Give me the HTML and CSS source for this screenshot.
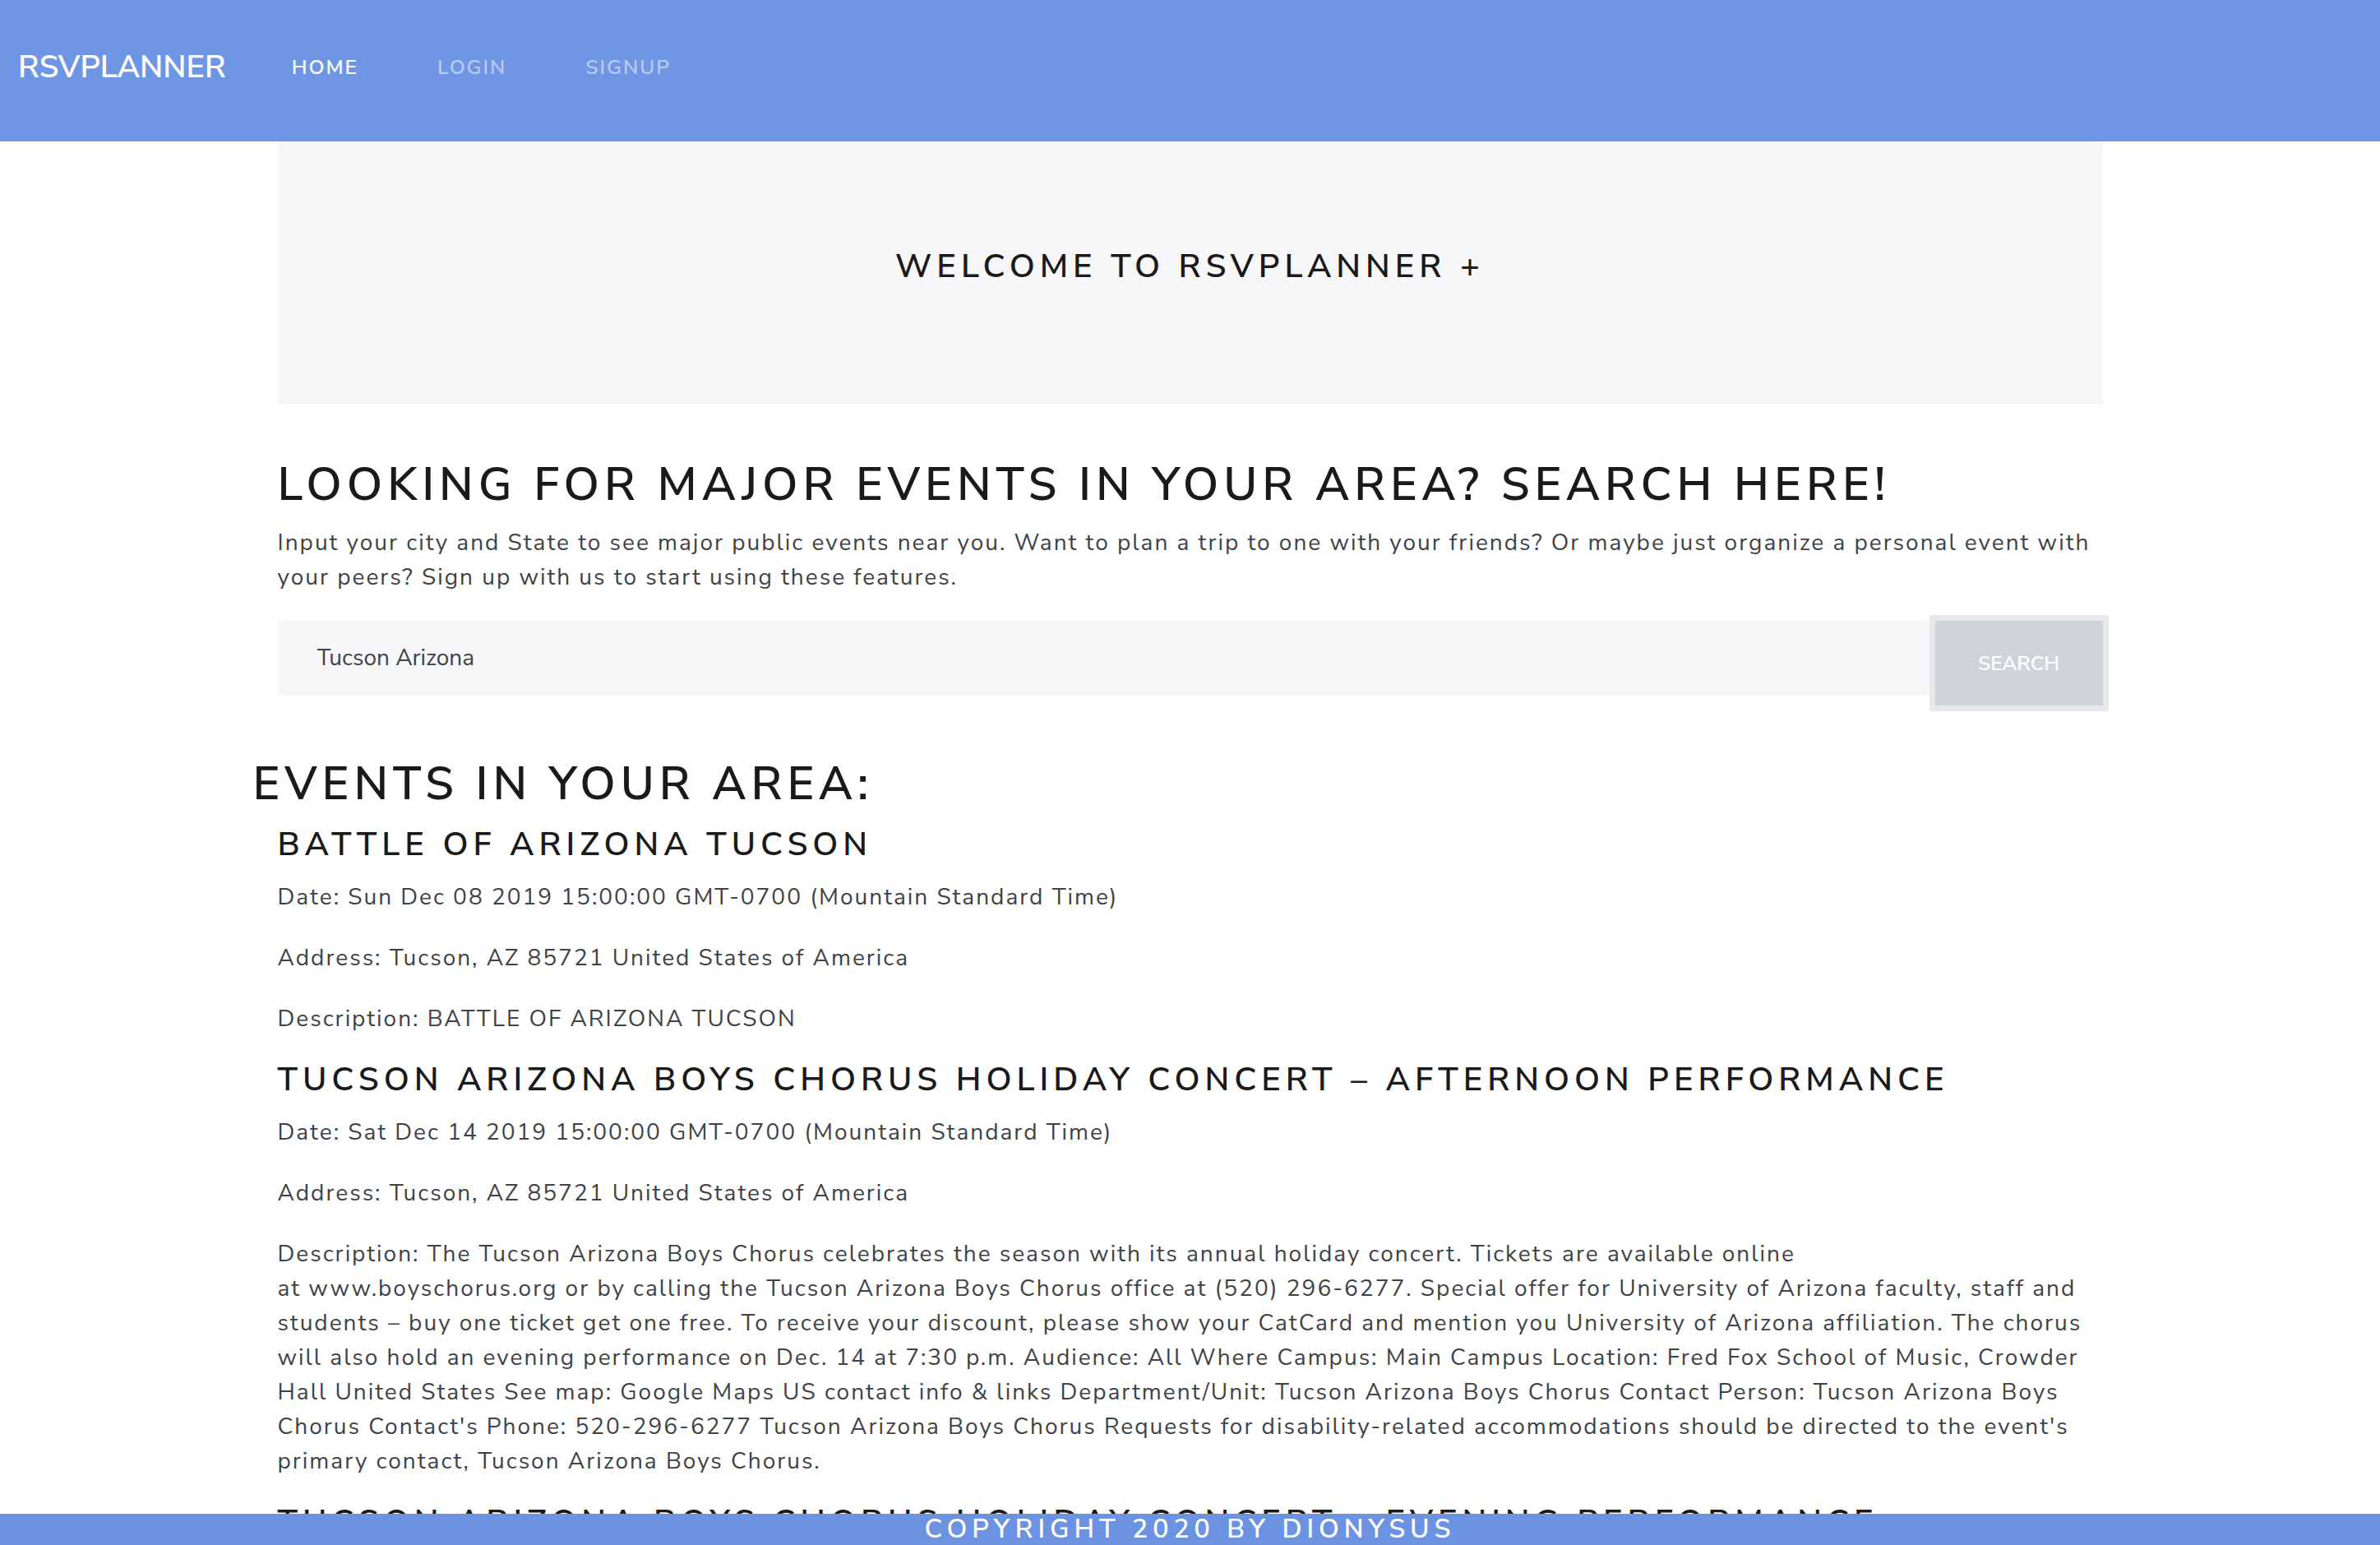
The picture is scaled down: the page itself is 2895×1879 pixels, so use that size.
FILE: index.html
```html
<!DOCTYPE html>
<html lang="en">
<head>
<meta charset="utf-8">
<title>RSVPlanner</title>
<link rel="stylesheet" href="styles.css">
</head>
<body>
<nav class="navbar">
  <a class="brand" href="#">RSVPlanner</a>
  <ul class="nav">
    <li><a class="nav-link active" href="#">Home</a></li>
    <li><a class="nav-link" href="#">Login</a></li>
    <li><a class="nav-link" href="#">Signup</a></li>
  </ul>
</nav>

<main class="container">
  <div class="jumbotron">
    <h4 class="welcome">Welcome to RSVPlanner +</h4>
  </div>
  <h2 class="h2">Looking for major events in your area? Search here!</h2>
  <p class="lead-text">Input your city and State to see major public events near you. Want to plan a trip to one with your friends? Or maybe just organize a personal event with your peers? Sign up with us to start using these features.</p>
  <form class="search">
    <input class="search-input" type="text" value="Tucson Arizona">
    <button class="search-btn" type="button">Search</button>
  </form>
</main>

<section class="events">
  <h2 class="h2">Events in your area:</h2>
  <div class="event">
    <h4 class="h4">Battle of Arizona Tucson</h4>
    <p>Date: Sun Dec 08 2019 15:00:00 GMT-0700 (Mountain Standard Time)</p>
    <p>Address: Tucson, AZ 85721 United States of America</p>
    <p>Description: BATTLE OF ARIZONA TUCSON</p>
  </div>
  <div class="event">
    <h4 class="h4">Tucson Arizona Boys Chorus Holiday Concert – Afternoon Performance</h4>
    <p>Date: Sat Dec 14 2019 15:00:00 GMT-0700 (Mountain Standard Time)</p>
    <p>Address: Tucson, AZ 85721 United States of America</p>
    <p>Description: The Tucson Arizona Boys Chorus celebrates the season with its annual holiday concert. Tickets are available online<br>at www.boyschorus.org or by calling the Tucson Arizona Boys Chorus office at (520) 296-6277. Special offer for University of Arizona faculty, staff and students – buy one ticket get one free. To receive your discount, please show your CatCard and mention you University of Arizona affiliation. The chorus will also hold an evening performance on Dec. 14 at 7:30 p.m. Audience: All Where Campus: Main Campus Location: Fred Fox School of Music, Crowder Hall United States See map: Google Maps US contact info &amp; links Department/Unit: Tucson Arizona Boys Chorus Contact Person: Tucson Arizona Boys Chorus Contact's Phone: 520-296-6277 Tucson Arizona Boys Chorus Requests for disability-related accommodations should be directed to the event's primary contact, Tucson Arizona Boys Chorus.</p>
  </div>
  <div class="event">
    <h4 class="h4">Tucson Arizona Boys Chorus Holiday Concert – Evening Performance</h4>
    <p>Date: Sat Dec 14 2019 19:30:00 GMT-0700 (Mountain Standard Time)</p>
    <p>Address: Tucson, AZ 85721 United States of America</p>
  </div>
</section>

<footer class="footer">
  <h5 class="footer-text">Copyright 2020 by Dionysus</h5>
</footer>
</body>
</html>
```

FILE: styles.css
```css
html, body {
  margin: 0;
  padding: 0;
}

body {
  font-family: "Nunito Sans", Lato, "Noto Sans", sans-serif;
  font-size: 28px;
  line-height: 42px;
  color: #404346;
  background: #ffffff;
  letter-spacing: 2px;
}

/* Navbar */
.navbar {
  height: 172px;
  background: #6f96e5;
  display: flex;
  align-items: center;
  padding: 0 22px 8px;
  box-sizing: border-box;
}

.brand {
  color: #ffffff;
  text-decoration: none;
  font-size: 38px;
  font-weight: 600;
  text-transform: uppercase;
  letter-spacing: 0;
  margin-right: 32px;
}

.nav {
  list-style: none;
  display: flex;
  margin: 0;
  padding: 0;
}

.nav-link {
  display: block;
  padding: 0 48px;
  font-size: 24.5px;
  font-weight: 600;
  text-transform: uppercase;
  letter-spacing: 2px;
  color: rgba(255, 255, 255, 0.5);
  text-decoration: none;
}

.nav-link.active {
  color: #ffffff;
}

/* Layout */
.container {
  width: 2280px;
  margin: 0 auto;
  padding: 0 30px;
  box-sizing: border-box;
}

.jumbotron {
  background: #f7f7f9;
  padding: 128px 64px;
  margin-bottom: 64px;
  text-align: center;
}

h2, h4, h5 {
  margin: 0 0 16px;
  color: #1a1a1a;
  font-weight: 600;
  text-transform: uppercase;
  letter-spacing: 6px;
  line-height: 1.2;
}

.h2 {
  font-size: 56px;
}

.h4,
.welcome {
  font-size: 40px;
}

p {
  margin: 0 0 29px;
  padding-top: 3px;
}

.lead-text {
  padding-top: 0;
  margin-bottom: 32px;
}

/* Search */
.search {
  display: flex;
  align-items: flex-start;
  margin-bottom: 62px;
}

.search-input {
  flex: 1;
  height: 90px;
  border: 0;
  background: #f7f7f9;
  padding: 0 48px;
  font-family: inherit;
  font-size: 28px;
  color: #404346;
  letter-spacing: 0;
  box-sizing: border-box;
  outline: none;
}

.search-btn {
  width: 204px;
  height: 103px;
  margin-left: 7px;
  border: 0;
  background: #cfd4d9;
  box-shadow: 0 0 0 7px #e7e8eb;
  color: #ffffff;
  font-family: inherit;
  font-size: 24.5px;
  font-weight: 600;
  text-transform: uppercase;
  letter-spacing: 0;
}

/* Events */
.events {
  width: 2280px;
  margin: 0 auto;
  padding-bottom: 60px;
}

.event {
  padding: 0 30px;
}

/* Footer */
.footer {
  position: fixed;
  left: 0;
  right: 0;
  bottom: 0;
  height: 38px;
  background: #6c93e1;
  text-align: center;
  overflow: hidden;
}

.footer-text {
  margin: 0;
  color: #ffffff;
  font-size: 32px;
  line-height: 38px;
  letter-spacing: 6px;
}
```
